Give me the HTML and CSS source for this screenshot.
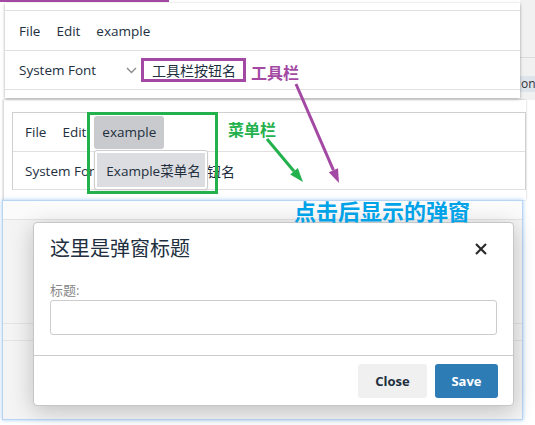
FILE: index.html
```html
<!DOCTYPE html>
<html lang="zh-CN">
<head>
<meta charset="utf-8">
<title>自定义菜单与工具栏按钮</title>
<link rel="stylesheet" href="styles.css">
</head>
<body>
<div class="canvas">
  <div class="bg-top"></div>
  <div class="bg-right"><span class="bg-chip">on</span></div>

  <section class="shot shot-toolbar">
    <div class="editor">
      <nav class="menubar">
        <span class="menu-item">File</span>
        <span class="menu-item">Edit</span>
        <span class="menu-item">example</span>
      </nav>
      <div class="toolbar">
        <div class="font-select">
          <span>System Font</span>
          <svg class="chevron" width="11" height="7" viewBox="0 0 11 7"><polyline points="1,1 5.5,5.5 10,1" fill="none" stroke="#8a8a8a" stroke-width="1.4"/></svg>
        </div>
        <span class="tb-btn tb-btn-marked">工具栏按钮名</span>
      </div>
    </div>
  </section>

  <section class="shot shot-menu">
    <div class="editor editor-boxed">
      <nav class="menubar menubar-2">
        <span class="menu-item">File</span>
        <span class="menu-item">Edit</span>
        <span class="menu-item menu-item-active">example
          <span class="dropdown"><span class="dropdown-item">Example菜单名</span></span>
        </span>
      </nav>
      <div class="toolbar toolbar-2">
        <div class="font-select">
          <span>System Font</span>
          <svg class="chevron" width="11" height="7" viewBox="0 0 11 7"><polyline points="1,1 5.5,5.5 10,1" fill="none" stroke="#8a8a8a" stroke-width="1.4"/></svg>
        </div>
        <span class="tb-btn tb-btn-2">工具栏按钮名</span>
      </div>
    </div>
  </section>

  <section class="shot shot-dialog">
    <div class="modal">
      <header class="modal-header">
        <h2 class="modal-title">这里是弹窗标题</h2>
        <svg class="modal-close" width="12" height="12" viewBox="0 0 12 12"><path d="M1 1 L11 11 M11 1 L1 11" stroke="#2b2b2b" stroke-width="2.2" fill="none"/></svg>
      </header>
      <div class="modal-body">
        <label class="field-label">标题:</label>
        <div class="field-input"></div>
      </div>
      <footer class="modal-footer">
        <span class="btn btn-close">Close</span>
        <span class="btn btn-save">Save</span>
      </footer>
    </div>
  </section>

  <div class="mark-menu"></div>
  <span class="note note-toolbar">工具栏</span>
  <span class="note note-menu">菜单栏</span>
  <span class="note note-dialog">点击后显示的弹窗</span>

  <svg class="arrows" width="535" height="425" viewBox="0 0 535 425">
    <line x1="296" y1="84" x2="333.4" y2="170.2" stroke="#a349a4" stroke-width="3"/>
    <polygon points="339,183 328.8,172.2 338,168.2" fill="#a349a4"/>
    <line x1="267" y1="139" x2="294" y2="171.3" stroke="#22b14c" stroke-width="3"/>
    <polygon points="303,182 290.2,174.5 297.8,168.1" fill="#22b14c"/>
  </svg>
</div>
</body>
</html>
```

FILE: styles.css
```css
* { box-sizing: border-box; }
html, body { margin: 0; padding: 0; background: #fff; }
body {
  font-family: "Open Sans", "Noto Sans CJK SC", sans-serif;
  font-size: 13.5px;
  color: #222f3e;
}
.canvas {
  position: relative;
  width: 535px;
  height: 425px;
  overflow: hidden;
  background: #fff;
}

/* background fragments */
.bg-top {
  position: absolute;
  left: 0; top: 0;
  width: 169px; height: 2px;
  background: #a349a4;
}
.bg-right {
  position: absolute;
  left: 520px; top: 0;
  width: 15px; height: 100px;
  background:
    linear-gradient(#dcdcdc, #dcdcdc) 0 57px / 100% 1px no-repeat,
    #f1f1f1;
}
.bg-chip {
  position: absolute;
  left: 0; top: 76px;
  width: 15px; height: 16px;
  padding-left: 1px;
  background: #dee4eb;
  font-size: 12px;
  line-height: 16px;
  color: #333;
}

/* screenshot pieces */
.shot { position: absolute; background: #fff; }
.shot-toolbar {
  left: 5px; top: 3px;
  width: 515px; height: 95px;
  z-index: 3;
  box-shadow: 0 1px 3px rgba(0,0,0,.35);
}
.shot-toolbar .editor { padding-top: 7px; }

.menubar {
  display: flex;
  align-items: center;
  height: 41px;
  padding-left: 6px;
  border-top: 1px solid #e0e0e0;
  border-bottom: 1px solid #e0e0e0;
}
.menu-item {
  position: relative;
  display: flex;
  align-items: center;
  height: 33px;
  padding: 0 8px;
  border-radius: 3px;
  white-space: nowrap;
}
.toolbar {
  display: flex;
  align-items: center;
  height: 39px;
  padding-left: 14px;
  border-bottom: 1px solid #e0e0e0;
}
.font-select {
  display: flex;
  align-items: center;
  justify-content: space-between;
  width: 118px;
}
.chevron { display: block; }
.tb-btn { display: flex; align-items: center; white-space: nowrap; font-size: 14px; }
.tb-btn-marked {
  margin-left: 4px;
  height: 24px;
  padding: 0 7px 0 8px;
  border: 3px solid #a349a4;
}

.shot-menu {
  left: 3px; top: 100px;
  width: 523px; height: 100px;
  z-index: 2;
  border-left: 1px solid #dcdcdc;
  box-shadow: 0 0 2px rgba(0,0,0,.25);
  padding: 12px 0 0 8px;
}
.editor-boxed {
  border: 1px solid #cfcfcf;
  border-bottom: 0;
}
.menubar-2 {
  height: 39px;
  padding-left: 4px;
  border-top: 0;
}
.menu-item-active { background: #c9cacd; }
.dropdown {
  position: absolute;
  left: 0; top: calc(100% + 1px);
  width: 114px;
  padding: 2px;
  background: #fff;
  border: 1px solid #cdcdcd;
  border-radius: 3px;
  box-shadow: 0 1px 2px rgba(0,0,0,.1);
}
.dropdown-item {
  display: flex;
  align-items: center;
  height: 34px;
  padding-left: 9px;
  background: #dcdde0;
  font-size: 13.5px;
}
.toolbar-2 { height: 38px; padding-left: 12px; }
.tb-btn-2 { margin-left: 8px; }

.shot-dialog {
  left: 2px; top: 200px;
  width: 521px; height: 220px;
  z-index: 4;
  border: 1px solid #b8d6f3;
  box-shadow: 0 0 4px rgba(90,160,235,.55);
  padding: 21px 0 0 30px;
  background:
    linear-gradient(#e4e4e4, #e4e4e4) 0 18px / 100% 1px no-repeat,
    linear-gradient(#e4e4e4, #e4e4e4) 0 122px / 100% 1px no-repeat,
    linear-gradient(#e4e4e4, #e4e4e4) 0 139px / 100% 1px no-repeat,
    linear-gradient(#fbfbfb, #fbfbfb) 0 0 / 100% 18px no-repeat,
    #f4f4f4;
}
.modal {
  width: 481px;
  background: #fff;
  border: 1px solid #c6c6c6;
  border-radius: 4px;
  box-shadow: 0 5px 22px rgba(0,0,0,.22);
}
.modal-header {
  display: flex;
  align-items: center;
  justify-content: space-between;
  padding: 14px 26px 0 16px;
}
.modal-title {
  margin: 0;
  font-size: 20px;
  font-weight: normal;
  line-height: 24px;
  color: #222f3e;
}
.modal-close { display: block; }
.modal-body { padding: 20px 16px 20px; }
.field-label {
  display: block;
  font-size: 13px;
  line-height: 18px;
  color: #888;
}
.field-input {
  margin-top: 1px;
  height: 35px;
  border: 1px solid #cccccc;
  border-radius: 3px;
}
.modal-footer {
  display: flex;
  justify-content: flex-end;
  gap: 8px;
  padding: 8px 15px 7px;
  border-top: 1px solid #cccccc;
}
.btn {
  display: flex;
  align-items: center;
  justify-content: center;
  height: 34px;
  border-radius: 3px;
  font-size: 13px;
  font-weight: bold;
}
.btn-close { width: 69px; background: #f0f0f0; color: #222f3e; }
.btn-save { width: 63px; background: #2d7cb6; color: #fff; }

/* annotations */
.mark-menu {
  position: absolute;
  left: 87px; top: 112px;
  width: 131px; height: 82px;
  border: 3px solid #22b14c;
  z-index: 5;
}
.note {
  position: absolute;
  z-index: 10;
  font-family: "Noto Sans CJK SC", sans-serif;
  font-weight: bold;
  white-space: nowrap;
}
.note-toolbar { left: 251px; top: 61px; font-size: 16px; line-height: 22px; color: #a349a4; }
.note-menu { left: 228px; top: 118px; font-size: 16px; line-height: 22px; color: #22b14c; }
.note-dialog { left: 294px; top: 196px; font-size: 22px; line-height: 28px; color: #00a2e8; }
.arrows {
  position: absolute;
  left: 0; top: 0;
  z-index: 11;
  pointer-events: none;
}
```
